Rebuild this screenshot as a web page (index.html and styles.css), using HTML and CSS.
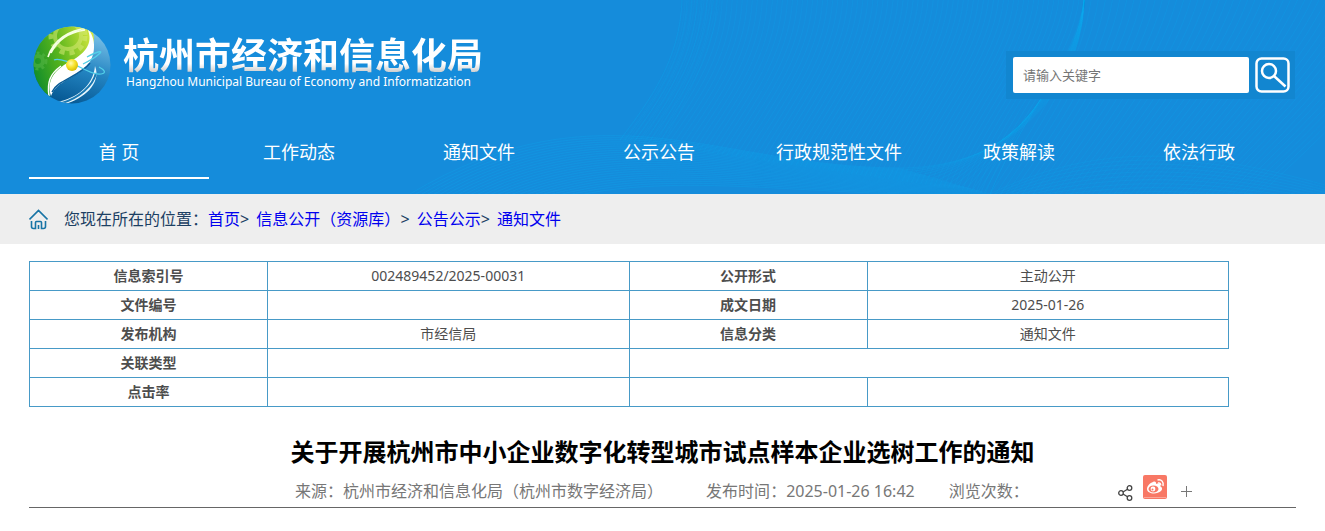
FILE: index.html
```html
<!DOCTYPE html>
<html lang="zh-CN">
<head>
  <meta charset="UTF-8">
  <meta name="viewport" content="width=device-width, initial-scale=1.0">
  <title>关于开展杭州市中小企业数字化转型城市试点样本企业选树工作的通知</title>
  <link rel="stylesheet" href="styles.css">
</head>
<body>
  <header class="header">
    <svg class="waves" id="waves" viewBox="0 0 1325 194" preserveAspectRatio="xMaxYMax slice" aria-hidden="true"></svg>
    <div class="header-top">
      <a class="brand" href="#">
        <svg class="logo" viewBox="0 0 78 78" aria-hidden="true">
          <defs>
            <linearGradient id="green" x1="0" y1="0.6" x2="1" y2="0.2">
              <stop offset="0" stop-color="#118d2b"/>
              <stop offset="0.45" stop-color="#58b51c"/>
              <stop offset="1" stop-color="#d3e63d"/>
            </linearGradient>
            <linearGradient id="blue" x1="0.6" y1="0" x2="0.3" y2="1">
              <stop offset="0" stop-color="#80c5ea"/>
              <stop offset="0.5" stop-color="#2485c2"/>
              <stop offset="1" stop-color="#03548f"/>
            </linearGradient>
            <radialGradient id="sun" cx="0.4" cy="0.35" r="0.7">
              <stop offset="0" stop-color="#fffbb0"/>
              <stop offset="0.5" stop-color="#f7e229"/>
              <stop offset="1" stop-color="#d3b600"/>
            </radialGradient>
            <clipPath id="ball"><circle cx="39" cy="39" r="38.5"/></clipPath>
          </defs>
          <g clip-path="url(#ball)">
            <rect width="78" height="78" fill="url(#blue)"/>
            <path d="M0 0H56C64 9 62 22 52 30C40 38 24 42 19 54C16 62 17 68 18 78H0Z" fill="url(#green)"/>
            <g fill="none" stroke="#d5ea76" opacity="0.55">
              <circle cx="35" cy="10" r="13" stroke-width="4"/>
              <circle cx="35" cy="10" r="17" stroke-width="5" stroke-dasharray="5 5"/>
              <circle cx="5" cy="35" r="5" stroke="#58b848" stroke-width="4"/>
              <circle cx="5" cy="35" r="8" stroke="#58b848" stroke-width="3" stroke-dasharray="3 3"/>
            </g>
            <path d="M54 2C64 12 63 30 54 40C44 52 24 54 18 70C13 54 22 44 36 36C50 29 62 18 54 2Z" fill="#fff"/>
            <path d="M19 66C24 54 46 51 57 37" fill="none" stroke="#0b5d97" stroke-width="1.5"/>
            <path d="M16 70C14 56 17 48 28 40" fill="none" stroke="#fff" stroke-width="1.5"/>
            <path d="M15 31C20 14 36 4 55 2M18 27C25 13 38 6 52 4" fill="none" stroke="#f6ffe2" stroke-width="1.6"/>
            <path d="M24 76C44 72 60 60 62 40C69 58 50 73 32 78Z" fill="#e7f6fc"/>
            <path d="M29 77C46 72 60 60 63 47" fill="none" stroke="#1878b3" stroke-width="2"/>
            <path d="M21 34C27 31 42 39 55 45C68 51 78 47 66 41M54 31C65 25 71 24 66 28C62 32 56 35 50 38" fill="none" stroke="#52cfe8" stroke-width="1.3"/>
          </g>
          <circle cx="39" cy="39" r="6" fill="url(#sun)"/>
        </svg>
        <span class="brand-text">
          <span class="brand-name">杭州市经济和信息化局</span>
          <span class="brand-en">Hangzhou Municipal Bureau of Economy and Informatization</span>
        </span>
      </a>
      <form class="search">
        <input class="search-input" type="text" placeholder="请输入关键字" aria-label="请输入关键字">
        <button class="search-btn" type="button" aria-label="搜索">
          <svg viewBox="0 0 35 36" fill="none" stroke="#fff">
            <rect x="1.5" y="1.5" width="32" height="33" rx="5" stroke-width="2.5"/>
            <circle cx="14" cy="14" r="7" stroke-width="2.5"/>
            <path d="M19 19L30.500 29.500" stroke-width="2.5"/>
          </svg>
        </button>
      </form>
    </div>
    <nav class="nav">
      <a class="active" href="#">首 页</a>
      <a href="#">工作动态</a>
      <a href="#">通知文件</a>
      <a href="#">公示公告</a>
      <a href="#">行政规范性文件</a>
      <a href="#">政策解读</a>
      <a href="#">依法行政</a>
    </nav>
  </header>

  <div class="crumbs">
    <svg class="home" viewBox="0 0 19 21" fill="none" stroke="#1874a5" stroke-width="1.6" aria-hidden="true">
      <path d="M0.500 10.500L9.500 1.500L18.500 10.500M2.500 12V17.500Q2.500 19.500 4.500 19.500H6.500V13.500Q6.500 12.500 7.500 12.500H11.500Q12.500 12.500 12.500 13.500V19.500H14.500Q16.500 19.500 16.500 17.500V12M9.500 16V20"/>
    </svg>
    <p>您现在所在的位置<span class="colon">：</span><a href="#">首页</a>&gt; <a href="#">信息公开（资源库）</a>&gt; <a href="#">公告公示</a>&gt; <a href="#">通知文件</a></p>
  </div>

  <main class="main">
    <table class="info">
      <tr>
        <th>信息索引号</th>
        <td>002489452/2025-00031</td>
        <th>公开形式</th>
        <td>主动公开</td>
      </tr>
      <tr>
        <th>文件编号</th>
        <td></td>
        <th>成文日期</th>
        <td>2025-01-26</td>
      </tr>
      <tr>
        <th>发布机构</th>
        <td>市经信局</td>
        <th>信息分类</th>
        <td>通知文件</td>
      </tr>
      <tr>
        <th>关联类型</th>
        <td></td>
      </tr>
      <tr>
        <th>点击率</th>
        <td></td>
        <td></td>
        <td></td>
      </tr>
    </table>

    <h1>关于开展杭州市中小企业数字化转型城市试点样本企业选树工作的通知</h1>
    <div class="meta">
      <span class="source">来源<span class="colon">：</span>杭州市经济和信息化局（杭州市数字经济局）</span>
      <span class="date">发布时间<span class="colon">：</span>2025-01-26 16:42</span>
      <span>浏览次数<span class="colon">：</span></span>
      <div class="share">
        <svg class="share-icon" viewBox="0 0 15 16" fill="none" stroke="#444" stroke-width="1.300" aria-hidden="true">
          <circle cx="3" cy="8" r="2.300"/>
          <circle cx="11.500" cy="3" r="2.300"/>
          <circle cx="11.500" cy="13" r="2.300"/>
          <path d="M5 7L9.500 4.200M5 9L9.500 11.800"/>
        </svg>
        <a class="weibo" href="#" aria-label="微博">
          <svg viewBox="0 0 24 24">
            <path d="M10 7C12 6 13.500 7 13 9C16 8 18 9 17 11C19 12 20 14 18 16C14 20 4 19 4 14C4 11 7 8 10 7Z" fill="#fff"/>
            <ellipse cx="10.500" cy="14" rx="5" ry="3.500" fill="#f87865"/>
            <circle cx="10" cy="14" r="2.400" fill="#fff"/>
            <circle cx="9.500" cy="14.500" r="1" fill="#f87865"/>
            <path d="M14.500 5C18.500 4 21 7 20 11M15 8C17 7.500 18 9 17.500 10.500" fill="none" stroke="#fff" stroke-width="1.500"/>
            <path d="M1 22.500H23" stroke="#fba699" stroke-width="1"/>
          </svg>
        </a>
        <button class="more" type="button" aria-label="更多">
          <svg viewBox="0 0 11 11"><path d="M5.500 0V11M0 5.500H11" stroke="#777"/></svg>
        </button>
      </div>
    </div>
  </main>
  <script src="waves.js"></script>
</body>
</html>
```
FILE: styles.css
```css
body {
  margin: 0;
  background: #fff;
  font-family: "Noto Sans", "Noto Sans CJK SC", sans-serif;
}

.header {
  position: relative;
  background: #158cdb;
}

.waves {
  position: absolute;
  top: 0;
  left: 0;
  width: 100%;
  height: 100%;
}

.header-top {
  position: relative;
  display: flex;
  justify-content: space-between;
  align-items: flex-start;
  padding: 26px 30px 0 33px;
}

.brand {
  display: flex;
  gap: 12px;
  text-decoration: none;
}

.logo {
  width: 78px;
  height: 78px;
}

.brand-text {
  display: flex;
  flex-direction: column;
  padding-top: 11px;
}

.brand-name {
  font-size: 36px;
  font-weight: bold;
  line-height: 38px;
  color: transparent;
  background: linear-gradient(#fff 70%, #c8c8c8 95%);
  background-clip: text;
  -webkit-background-clip: text;
}

.brand-en {
  padding-left: 3px;
  font-size: 12px;
  line-height: 14px;
  color: #fff;
}

.search {
  display: flex;
  gap: 6px;
  margin-top: 25px;
  padding: 6px 5px 6px 7px;
  background: #1286d0;
}

.search-input {
  box-sizing: border-box;
  width: 236px;
  height: 36px;
  padding: 0 10px;
  border: none;
  border-radius: 2px;
  font-family: inherit;
  font-size: 13px;
}

.search-input::placeholder {
  color: #757575;
}

.search-btn {
  width: 35px;
  height: 36px;
  padding: 0;
  border: none;
  background: none;
  cursor: pointer;
}

.search-btn svg,
.weibo svg,
.more svg {
  display: block;
}

.nav {
  position: relative;
  display: flex;
  padding: 24px 29px 15px;
}

.nav a {
  width: 180px;
  border-bottom: 2px solid transparent;
  font-size: 18px;
  line-height: 49px;
  text-align: center;
  color: #fff;
  text-decoration: none;
}

.nav .active {
  border-bottom-color: #fff;
}

.crumbs {
  display: flex;
  align-items: center;
  gap: 16px;
  height: 50px;
  padding: 0 29px;
  background: #eee;
  font-size: 16px;
  color: #1c3f63;
}

.crumbs p {
  margin: 0;
  padding-bottom: 2px;
}

.crumbs a {
  color: #00e;
  text-decoration: none;
}

.crumbs a + a {
  margin-left: 3px;
}

/* the TC face sets the full-width colon in the middle of its box */
.colon {
  font-family: "Noto Sans CJK TC", sans-serif;
  line-height: 1;
}

.home {
  width: 19px;
  height: 21px;
}

.main {
  padding: 17px 29px;
}

.info {
  width: 100%;
  max-width: 1200px;
  border-collapse: collapse;
  table-layout: fixed;
  font-size: 14px;
  line-height: 20px;
  color: #4d4d4d;
  text-align: center;
}

.info th,
.info td {
  height: 20px;
  padding: 4px 0;
  border: 1px solid #479ac7;
}

.info th {
  width: 237px;
}

h1 {
  margin: 27px 0 0;
  font-size: 24px;
  line-height: 36px;
  text-align: center;
  color: #000;
}

.meta {
  box-sizing: border-box;
  display: flex;
  align-items: center;
  height: 38px;
  padding: 2px 104px 0 21%;
  border-bottom: 1px solid #666;
  font-size: 16px;
  color: #777;
}

.source {
  margin-right: 43px;
}

.date {
  margin-right: 34px;
}

.share {
  display: flex;
  align-items: center;
  margin-left: auto;
  padding-bottom: 6px;
}

.share-icon {
  width: 15px;
  height: 16px;
  margin: 12px 10px 0 0;
}

.weibo {
  width: 24px;
  height: 24px;
  margin-right: 14px;
  border-radius: 2px;
  background: #f87865;
}

.more {
  width: 11px;
  height: 11px;
  margin-top: 10px;
  padding: 0;
  border: none;
  background: none;
  cursor: pointer;
}
```
FILE: waves.js
```js
const waves = document.getElementById('waves');

// Draws a fan of cubic curves between two edge curves (8 numbers each)
function drawFan(from, to, count, opacity) {
  for (let i = 0; i <= count; i++) {
    const p = from.map((v, k) => v + (to[k] - v) * i / count);
    const path = document.createElementNS('http://www.w3.org/2000/svg', 'path');
    path.setAttribute('d', `M${p[0]} ${p[1]}C${p.slice(2).join(' ')}`);
    path.setAttribute('fill', 'none');
    path.setAttribute('stroke', '#0caaf0');
    path.setAttribute('stroke-opacity', opacity);
    waves.appendChild(path);
  }
}

// vertical folds
drawFan([682, 0, 680, 60, 650, 100, 620, 140], [1084, 0, 1076, 60, 1020, 120, 990, 194], 80, 0.2);
drawFan([682, 0, 680, 60, 650, 100, 620, 140], [720, 0, 710, 60, 680, 110, 660, 150], 12, 0.12);
drawFan([1084, 0, 1076, 60, 1040, 120, 990, 194], [1440, 0, 1400, 60, 1330, 130, 1260, 194], 50, 0.2);
drawFan([1084, 0, 1083, 80, 1020, 168, 900, 168], [1084, 0, 1078, 60, 1030, 100, 990, 194], 16, 0.18);

// waves along the bottom
drawFan([410, 194, 600, 80, 720, 168, 900, 168], [520, 214, 640, 160, 800, 200, 990, 194], 24, 0.25);
drawFan([990, 194, 1100, 140, 1200, 150, 1325, 185], [990, 214, 1100, 190, 1200, 190, 1325, 210], 10, 0.18);
```
